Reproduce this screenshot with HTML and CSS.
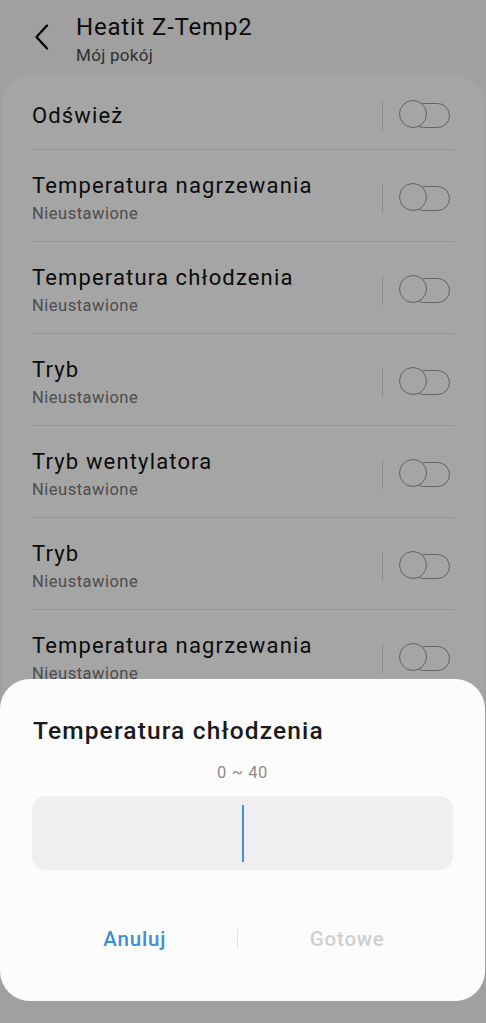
FILE: index.html
```html
<!DOCTYPE html>
<html lang="pl">
<head>
    <meta charset="UTF-8">
    <title>Heatit Z-Temp2</title>
    <link rel="stylesheet" href="styles.css">
</head>
<body>
    <div class="app-bar">
        <svg class="back-icon" width="16" height="26" viewBox="0 0 16 26">
            <path d="M13 1.5 L2.5 13 L13 24.5" fill="none" stroke="#000" stroke-width="2.2" stroke-linecap="round" stroke-linejoin="round"/>
        </svg>
        <div class="app-titles">
            <div class="app-title">Heatit Z-Temp2</div>
            <div class="app-subtitle">Mój pokój</div>
        </div>
    </div>

    <div class="card">
        <div class="row row-single">
            <div class="row-text"><div class="row-title">Odśwież</div></div>
            <div class="row-switch"><span class="switch"></span></div>
        </div>
        <div class="row">
            <div class="row-text"><div class="row-title">Temperatura nagrzewania</div><div class="row-sub">Nieustawione</div></div>
            <div class="row-switch"><span class="switch"></span></div>
        </div>
        <div class="row">
            <div class="row-text"><div class="row-title">Temperatura chłodzenia</div><div class="row-sub">Nieustawione</div></div>
            <div class="row-switch"><span class="switch"></span></div>
        </div>
        <div class="row">
            <div class="row-text"><div class="row-title">Tryb</div><div class="row-sub">Nieustawione</div></div>
            <div class="row-switch"><span class="switch"></span></div>
        </div>
        <div class="row">
            <div class="row-text"><div class="row-title">Tryb wentylatora</div><div class="row-sub">Nieustawione</div></div>
            <div class="row-switch"><span class="switch"></span></div>
        </div>
        <div class="row">
            <div class="row-text"><div class="row-title">Tryb</div><div class="row-sub">Nieustawione</div></div>
            <div class="row-switch"><span class="switch"></span></div>
        </div>
        <div class="row">
            <div class="row-text"><div class="row-title">Temperatura nagrzewania</div><div class="row-sub">Nieustawione</div></div>
            <div class="row-switch"><span class="switch"></span></div>
        </div>
    </div>

    <div class="scrim"></div>

    <div class="dialog">
        <div class="dialog-title">Temperatura chłodzenia</div>
        <div class="dialog-range">0 ~ 40</div>
        <div class="dialog-input"><span class="cursor"></span></div>
        <div class="dialog-buttons">
            <div class="dialog-btn btn-cancel">Anuluj</div>
            <div class="btn-divider"></div>
            <div class="dialog-btn btn-done">Gotowe</div>
        </div>
    </div>
</body>
</html>
```

FILE: styles.css
```css
/* Device settings screen with number dialog */
body {
    margin: 0;
    padding: 0;
    font-family: Roboto, "Noto Sans", sans-serif;
    background-color: #f6f6f6;
    color: #000;
    height: 1023px;
    overflow: hidden;
}

.app-bar {
    display: flex;
    align-items: flex-start;
    height: 76px;
    padding-left: 34px;
}

.back-icon {
    margin-top: 24px;
    margin-right: 26px;
}

.app-titles {
    padding-top: 12px;
}

.app-title {
    font-size: 24px;
    line-height: 30px;
    letter-spacing: 0.8px;
    color: #111;
}

.app-subtitle {
    font-size: 17px;
    line-height: 22px;
    letter-spacing: 0.3px;
    color: #4a4a4a;
    margin-top: 2px;
}

.card {
    margin: 0 2px;
    padding: 0 30px 80px;
    background-color: #fdfdfd;
    border-radius: 28px;
}

.row {
    display: flex;
    align-items: center;
    padding: 23px 0 17px;
    border-bottom: 1px solid #e2e2e2;
}

.row-single {
    padding: 25px 0 19px;
}

.row-text {
    flex: 1;
}

.row-title {
    font-size: 22px;
    line-height: 26px;
    letter-spacing: 1.15px;
    color: #111;
}

.row-sub {
    font-size: 16.5px;
    line-height: 20px;
    letter-spacing: 0.5px;
    margin-top: 5px;
    color: #777;
}

.row-switch {
    display: flex;
    align-items: center;
    border-left: 1px solid #d6d6d6;
    height: 29px;
    padding-left: 16px;
    margin-right: 4px;
}

.switch {
    position: relative;
    display: block;
    width: 37px;
    height: 23px;
    margin-left: 12px;
    border: 1.5px solid #9a9a9a;
    border-radius: 13px;
}

.switch::before {
    content: "";
    position: absolute;
    left: -13px;
    top: -4px;
    width: 26px;
    height: 26px;
    border: 1.5px solid #9a9a9a;
    border-radius: 50%;
    background-color: #fdfdfd;
}

.scrim {
    position: fixed;
    top: 0;
    left: 0;
    right: 0;
    bottom: 0;
    background-color: rgba(0, 0, 0, 0.35);
}

.dialog {
    position: fixed;
    left: 0;
    right: 1px;
    top: 679px;
    height: 322px;
    box-sizing: border-box;
    padding: 37px 32px 0 32px;
    background-color: #fcfcfc;
    border-radius: 30px;
}

.dialog-title {
    font-size: 24.5px;
    font-weight: 500;
    line-height: 30px;
    letter-spacing: 1.15px;
    color: #1a1a1a;
    padding-left: 1px;
}

.dialog-range {
    text-align: center;
    font-size: 16.5px;
    line-height: 20px;
    letter-spacing: 0.6px;
    color: #8c8c8c;
    margin-top: 17px;
}

.dialog-input {
    display: flex;
    justify-content: center;
    align-items: center;
    height: 74px;
    margin-top: 13px;
    background-color: #efeff1;
    border-radius: 14px;
}

.cursor {
    display: block;
    width: 2px;
    height: 57px;
    background-color: #4590d3;
}

.dialog-buttons {
    display: flex;
    align-items: center;
    margin: 57px 0 0 -3px;
    height: 24px;
}

.dialog-btn {
    flex: 1;
    text-align: center;
    font-size: 20.5px;
    font-weight: 500;
    line-height: 24px;
    letter-spacing: 0.8px;
}

.btn-cancel {
    color: #3d8fd2;
}

.btn-done {
    color: #cfcfcf;
}

.btn-divider {
    width: 1px;
    height: 20px;
    margin: 0 4px 0 -4px;
    background-color: #e2e2e2;
}
```
